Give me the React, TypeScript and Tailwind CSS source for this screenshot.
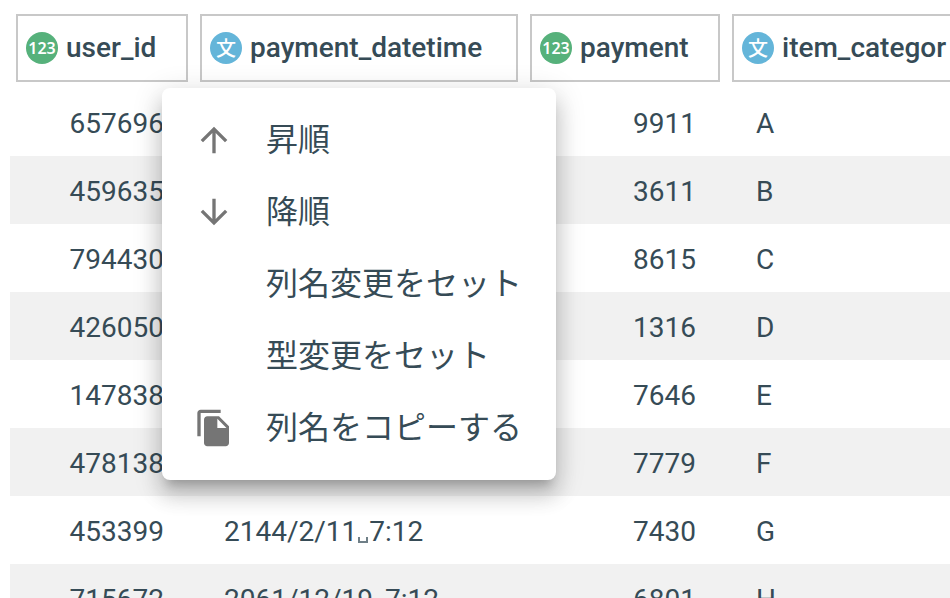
import React from "react";

type ColumnType = "number" | "text";

interface Column {
  key: string;
  type: ColumnType;
  width: string;
}

interface Row {
  userId: string;
  date?: [string, string];
  payment: string;
  category: string;
}

const columns: Column[] = [
  { key: "user_id", type: "number", width: "w-[184px]" },
  { key: "payment_datetime", type: "text", width: "w-[330px]" },
  { key: "payment", type: "number", width: "w-[202px]" },
  { key: "item_categor", type: "text", width: "w-[290px]" },
];

const rows: Row[] = [
  { userId: "657696", payment: "9911", category: "A" },
  { userId: "459635", payment: "3611", category: "B" },
  { userId: "794430", payment: "8615", category: "C" },
  { userId: "426050", payment: "1316", category: "D" },
  { userId: "147838", payment: "7646", category: "E" },
  { userId: "478138", payment: "7779", category: "F" },
  { userId: "453399", date: ["2144/2/11", "7:12"], payment: "7430", category: "G" },
  { userId: "715672", date: ["2061/12/19", "7:12"], payment: "6801", category: "H" },
];

const UP = "M4 12l1.41 1.41L11 7.83V20h2V7.83l5.58 5.59L20 12l-8-8-8 8z";
const DOWN = "M20 12l-1.41-1.41L13 16.17V4h-2v12.17l-5.58-5.59L4 12l8 8 8-8z";
const COPY =
  "M16 1H4c-1.1 0-2 .9-2 2v14h2V3h12V1zm-1 4l6 6v10c0 1.1-.9 2-2 2H7.99C6.89 23 6 22.1 6 21l.01-14c0-1.1.89-2 1.99-2h7zm-1 7h5.5L14 6.5V12z";

const menuItems: { label: string; icon?: string }[] = [
  { label: "昇順", icon: UP },
  { label: "降順", icon: DOWN },
  { label: "列名変更をセット" },
  { label: "型変更をセット" },
  { label: "列名をコピーする", icon: COPY },
];

function TypeBadge({ type }: { type: ColumnType }) {
  return type === "number" ? (
    <span className="flex size-8 shrink-0 items-center justify-center rounded-full bg-[#56b17b] font-['Noto_Sans',sans-serif] text-base leading-8 font-semibold text-white">
      123
    </span>
  ) : (
    <span className="flex size-8 shrink-0 items-center justify-center rounded-full bg-[#64b5d9] font-['Noto_Sans_CJK_JP',sans-serif] text-xl leading-8 font-medium text-white">
      文
    </span>
  );
}

// Makes a space inside a value visible.
function SpaceMark() {
  return (
    <span className="mx-px inline-block h-[6px] w-[10px] border-x-2 border-b-2 border-[#6f7f87] align-[-2px]" />
  );
}

function ColumnMenu() {
  return (
    <div
      role="menu"
      className="absolute top-[88px] left-[162px] min-w-[394px] rounded-lg bg-white py-4 shadow-[0_10px_10px_-6px_rgba(0,0,0,0.2),0_16px_20px_2px_rgba(0,0,0,0.14),0_6px_28px_4px_rgba(0,0,0,0.12)]"
    >
      {menuItems.map((item) => (
        <button
          key={item.label}
          type="button"
          role="menuitem"
          className="flex h-[72px] w-full items-center gap-8 px-8 text-left text-[32px] leading-[48px] whitespace-nowrap"
        >
          <span className="size-10 shrink-0 text-[#757575]">
            {item.icon && (
              <svg viewBox="0 0 24 24" className="size-10" fill="currentColor" aria-hidden="true">
                <path d={item.icon} />
              </svg>
            )}
          </span>
          {item.label}
        </button>
      ))}
    </div>
  );
}

export default function App() {
  return (
    <main className="relative h-screen overflow-hidden bg-white pt-2 pl-[10px] font-[Roboto,'Noto_Sans_CJK_JP',sans-serif] text-[28px] leading-8 text-[#364b56]">
      <table className="w-[1006px] min-w-full table-fixed border-collapse">
        <thead>
          <tr>
            {columns.map((col) => (
              <th key={col.key} scope="col" className={`p-[6px] text-left font-medium ${col.width}`}>
                <div className="flex h-[68px] items-center gap-2 border-2 border-[#c8c8c8] px-2">
                  <TypeBadge type={col.type} />
                  {col.key}
                </div>
              </th>
            ))}
          </tr>
        </thead>
        <tbody>
          {rows.map((row) => (
            <tr key={row.userId} className="h-[68px] even:bg-[#f1f1f1]">
              <td className="px-[30px] pt-1 text-right">{row.userId}</td>
              <td className="px-[30px] pt-1">
                {row.date && (
                  <>
                    {row.date[0]}
                    <SpaceMark />
                    {row.date[1]}
                  </>
                )}
              </td>
              <td className="px-[30px] pt-1 text-right">{row.payment}</td>
              <td className="px-[30px] pt-1">{row.category}</td>
            </tr>
          ))}
        </tbody>
      </table>
      <ColumnMenu />
    </main>
  );
}
